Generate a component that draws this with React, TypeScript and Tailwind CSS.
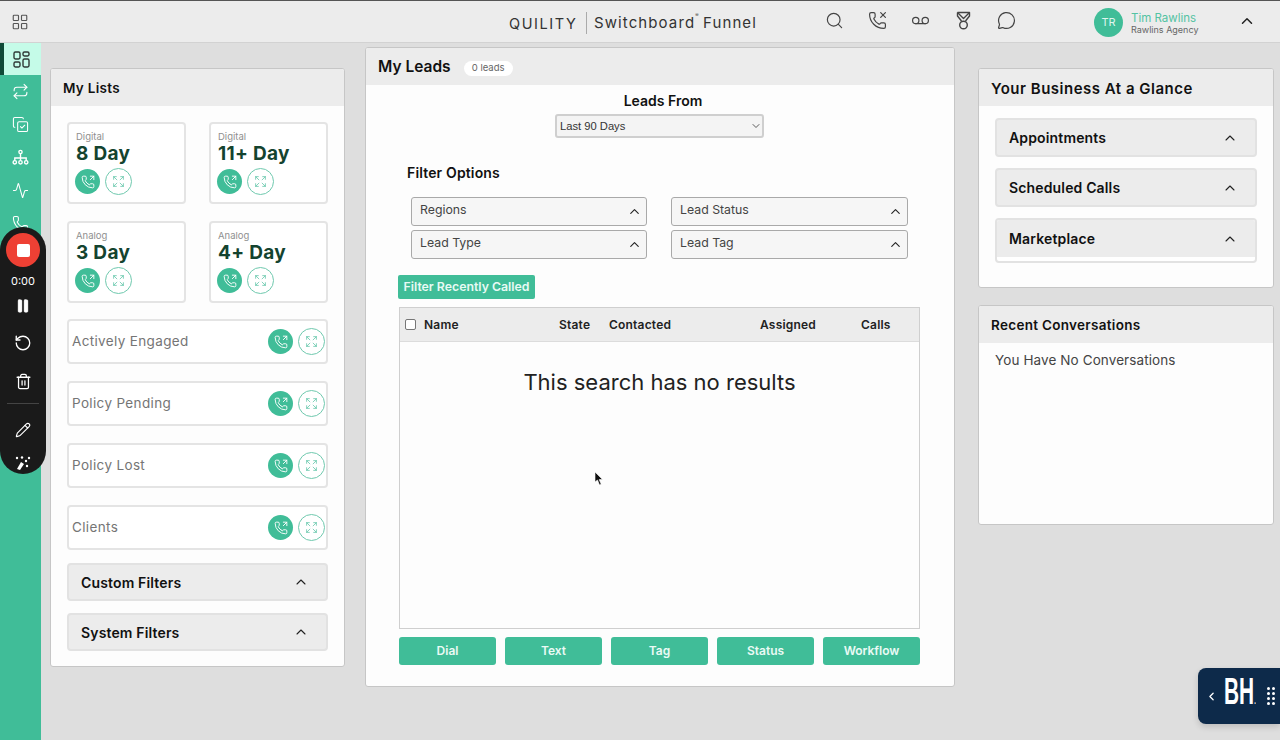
import React from 'react';
import {
  Activity,
  ChevronDown,
  ChevronLeft,
  ChevronUp,
  CopyCheck,
  Expand,
  LayoutGrid,
  MessageCircle,
  Pause,
  Pencil,
  Phone,
  PhoneMissed,
  PhoneOutgoing,
  Repeat,
  RotateCcw,
  Search,
  Trash2,
  Voicemail,
} from 'lucide-react';

const font = "font-['Inter','Open_Sans',sans-serif]";

const ActiveIcon = () => (
  <svg width="17" height="17" viewBox="0 0 17 17" fill="none" stroke="#2f3a36" strokeWidth="1.4">
    <rect x="1" y="1" width="6" height="7" rx="1.4" />
    <rect x="10" y="1" width="6" height="4" rx="1.4" />
    <rect x="1" y="11" width="6" height="5" rx="1.4" />
    <rect x="10" y="8" width="6" height="8" rx="1.4" />
  </svg>
);

const RibbonMedal = () => (
  <svg width="19" height="19" viewBox="0 0 19 19" fill="none" stroke="#444" strokeWidth="1.4" strokeLinejoin="round">
    <path d="M3.5 1.5 H15.5 V5 L11.5 10 M3.5 1.5 V5 L7.5 10" />
    <path d="M3.5 1.5 L9.5 7.5 L15.5 1.5" />
    <circle cx="9.5" cy="14" r="3.8" />
  </svg>
);

const SiteMap = () => (
  <svg width="17" height="17" viewBox="0 0 17 17" fill="none" stroke="#fff" strokeWidth="1.4">
    <circle cx="8.5" cy="3" r="1.6" />
    <path d="M8.5 4.6 V11.5 M2.8 11.5 V9 H14.2 V11.5" />
    <circle cx="2.8" cy="13.3" r="1.7" />
    <circle cx="8.5" cy="13.3" r="1.7" />
    <circle cx="14.2" cy="13.3" r="1.7" />
  </svg>
);

const CallButtons = () => (
  <div className="flex items-center gap-[5px]">
    <div className="w-[25px] h-[25px] rounded-full bg-[#40bd98] flex items-center justify-center">
      <PhoneOutgoing size={14} color="#fff" strokeWidth={1.6} />
    </div>
    <div className="w-[27px] h-[27px] rounded-full border border-[#6fc9ae] bg-white flex items-center justify-center">
      <Expand size={13} color="#5cc4a6" strokeWidth={1.4} />
    </div>
  </div>
);

const DayCard = ({ kind, label }: { kind: string; label: string }) => (
  <div className="w-[119px] h-[82px] border-2 border-[#e4e4e4] rounded-[4px] bg-white pl-[7px] pt-[7px]">
    <div className="text-[9.5px] leading-[12px] text-[#8f8f8f]">{kind}</div>
    <div className="text-[19px] leading-[21px] font-bold text-[#14432f] tracking-[0.3px] mb-[4px]">{label}</div>
    <div className="-ml-[1px]">
      <CallButtons />
    </div>
  </div>
);

const ListRow = ({ label }: { label: string }) => (
  <div className="h-[45px] border-2 border-[#e4e4e4] rounded-[4px] bg-white flex items-center justify-between pl-[3px] pr-[1px]">
    <span className="text-[13.5px] text-[#757575] tracking-[0.35px]">{label}</span>
    <CallButtons />
  </div>
);

const Accordion = ({ label, className = 'h-[39px]' }: { label: string; className?: string }) => (
  <div className={`${className} border-2 border-[#e2e2e2] rounded-[4px] bg-[#ececec] flex items-center justify-between pl-[12px] pr-[17px]`}>
    <span className="text-[14px] font-semibold text-[#111] tracking-[0.15px]">{label}</span>
    <ChevronUp size={16} color="#222" strokeWidth={1.6} />
  </div>
);

const FilterSelect = ({ label }: { label: string }) => (
  <div className="h-[29px] border border-[#a9a9a9] rounded-[3px] bg-[#f6f6f6] flex items-center justify-between pl-[8px] pr-[4px]">
    <span className="text-[12.3px] text-[#444] pb-[2px]">{label}</span>
    <ChevronUp size={15} color="#222" strokeWidth={1.8} />
  </div>
);

const PanelHeader = ({ title }: { title: string }) => (
  <div className="h-[37px] bg-[#ececec] flex items-center pl-[12px] pt-[2px]">
    <span className="text-[13.5px] font-semibold text-[#111] tracking-[0.3px]">{title}</span>
  </div>
);

const panel = 'bg-[#fdfdfd] rounded-[3px] border border-[#c6c6c6] overflow-hidden';

export default function App() {
  return (
    <div className={`${font} relative w-[1280px] h-[740px] overflow-hidden bg-[#dedede]`}>
      {/* top bar */}
      <header className="h-[43px] bg-[#ececec] border-t border-t-[#555] border-b border-b-[#d2d2d2] flex items-center">
        <div className="ml-[11px] w-[18px]">
          <LayoutGrid size={18} color="#555" strokeWidth={1.5} />
        </div>
        <span className="ml-[480px] w-[77px] pt-[4px] text-[14.5px] tracking-[1.6px] text-[#333]">QUILITY</span>
        <div className="w-px h-[22px] bg-[#aaa] mt-[2px]" />
        <span className="ml-[7px] w-[109px] pt-[4px] text-[15px] tracking-[1.1px] text-[#333]">
          Switchboard<span className="align-top text-[5px] tracking-normal">®</span>
        </span>
        <span className="w-[56px] pt-[4px] text-[15px] tracking-[1.1px] text-[#333]">Funnel</span>
        <div className="ml-[66px] -mt-[2px] flex items-center gap-[24px]">
          <Search size={19} color="#444" strokeWidth={1.5} />
          <PhoneMissed size={19} color="#444" strokeWidth={1.5} />
          <Voicemail size={19} color="#444" strokeWidth={1.5} />
          <RibbonMedal />
          <MessageCircle size={19} color="#444" strokeWidth={1.5} />
        </div>
        <div className="ml-[78px] mt-[1px] w-[29px] h-[29px] rounded-full bg-[#40bd98] flex items-center justify-center text-[11px] text-[#dff5ee]">TR</div>
        <div className="ml-[8px] mt-[5px] w-[108px]">
          <div className="text-[11.5px] leading-[12px] text-[#54c3a3]">Tim Rawlins</div>
          <div className="text-[9px] leading-[12px] text-[#666]">Rawlins Agency</div>
        </div>
        <ChevronUp size={18} color="#222" strokeWidth={2} className="-ml-[1px] -mt-[2px]" />
      </header>

      <div className="flex h-[697px]">
        {/* side nav */}
        <nav className="w-[41px] bg-[#40bd98] flex flex-col">
          <div className="h-[32px] bg-[#c5fbe8] border-l-4 border-l-[#0f4a37] flex items-center justify-center pr-[2px]">
            <ActiveIcon />
          </div>
          <div className="h-[33px] flex items-center justify-center">
            <Repeat size={17} color="#fff" strokeWidth={1.5} />
          </div>
          <div className="h-[33px] flex items-center justify-center">
            <CopyCheck size={17} color="#fff" strokeWidth={1.5} />
          </div>
          <div className="h-[33px] flex items-center justify-center">
            <SiteMap />
          </div>
          <div className="h-[33px] flex items-center justify-center">
            <Activity size={17} color="#fff" strokeWidth={1.5} />
          </div>
          <div className="h-[33px] flex items-center justify-center">
            <Phone size={17} color="#fff" strokeWidth={1.5} />
          </div>
        </nav>

        {/* my lists */}
        <section className={`${panel} ml-[9px] mt-[25px] w-[295px] h-[599px]`}>
          <PanelHeader title="My Lists" />
          <div className="px-[16px] pt-[16px]">
            <div className="grid grid-cols-[119px_119px] justify-between gap-y-[17px]">
              <DayCard kind="Digital" label="8 Day" />
              <DayCard kind="Digital" label="11+ Day" />
              <DayCard kind="Analog" label="3 Day" />
              <DayCard kind="Analog" label="4+ Day" />
            </div>
            <div className="mt-[16px] flex flex-col gap-[17px]">
              <ListRow label="Actively Engaged" />
              <ListRow label="Policy Pending" />
              <ListRow label="Policy Lost" />
              <ListRow label="Clients" />
            </div>
            <div className="mt-[13px] flex flex-col gap-[12px]">
              <Accordion label="Custom Filters" className="h-[38px]" />
              <Accordion label="System Filters" className="h-[38px]" />
            </div>
          </div>
        </section>

        {/* my leads */}
        <section className={`${panel} ml-[20px] mt-[4px] w-[590px] h-[640px]`}>
          <div className="h-[37px] bg-[#ececec] flex items-center pl-[12px]">
            <span className="text-[15.5px] font-semibold text-[#111] pt-[1px]">My Leads</span>
            <span className="ml-[13px] mt-[4px] w-[49px] h-[15px] rounded-full bg-white flex items-center justify-center text-[9.5px] text-[#666]">0 leads</span>
          </div>
          <div className="pl-[6px] text-center mt-[8px] text-[14px] leading-[16px] font-semibold text-[#111]">Leads From</div>
          <div className="ml-[189px] mt-[5px] w-[209px] h-[24px] border-2 border-[#cfcfcf] rounded-[3px] bg-[#f4f4f4] flex items-center justify-between pl-[3px] font-['Liberation_Sans',sans-serif] text-[11.2px] text-[#333]">
            <span>Last 90 Days</span>
            <ChevronDown size={12} color="#333" strokeWidth={1.6} />
          </div>
          <div className="ml-[41px] mt-[27px] text-[14px] leading-[16px] font-semibold text-[#111] tracking-[0.15px]">Filter Options</div>
          <div className="ml-[45px] mt-[16px] grid grid-cols-[236px_237px] gap-x-[24px] gap-y-[4px]">
            <FilterSelect label="Regions" />
            <FilterSelect label="Lead Status" />
            <FilterSelect label="Lead Type" />
            <FilterSelect label="Lead Tag" />
          </div>
          <div className="ml-[32px] mt-[16px] w-[137px] h-[24px] rounded-[2px] bg-[#40bd98] flex items-center justify-center text-[12.3px] font-semibold text-[#e8faf4]">
            Filter Recently Called
          </div>
          <div className="ml-[33px] mt-[8px] w-[521px] h-[322px] border border-[#cfcfcf]">
            <div className="h-[34px] bg-[#ececec] border-b border-b-[#dcdcdc] relative grid grid-cols-[135px_50px_151px_101px_1fr] items-center pl-[24px] text-[12px] font-semibold text-[#222] tracking-[0.2px]">
              <div className="absolute left-[5px] top-[11px] w-[11px] h-[11px] rounded-[2px] border border-[#777] bg-white" />
              <span>Name</span>
              <span>State</span>
              <span>Contacted</span>
              <span>Assigned</span>
              <span>Calls</span>
            </div>
            <div className="mt-[26px] text-center text-[22px] leading-[28px] text-[#222]">This search has no results</div>
          </div>
          <div className="ml-[33px] mt-[8px] w-[521px] flex justify-between">
            {['Dial', 'Text', 'Tag', 'Status', 'Workflow'].map((b) => (
              <div key={b} className="w-[97px] h-[28px] rounded-[3px] bg-[#40bd98] flex items-center justify-center text-[12px] font-semibold text-[#eafaf5]">{b}</div>
            ))}
          </div>
        </section>

        {/* right column */}
        <div className="ml-[23px] mt-[25px] w-[296px] flex flex-col gap-[17px]">
          <section className={`${panel} h-[220px]`}>
            <div className="h-[37px] bg-[#ececec] flex items-center pl-[12px] pt-[3px]">
              <span className="text-[15px] font-semibold text-[#111] tracking-[0.5px]">Your Business At a Glance</span>
            </div>
            <div className="px-[16px] pt-[12px] flex flex-col gap-[11px]">
              <Accordion label="Appointments" />
              <Accordion label="Scheduled Calls" />
              <div className="h-[45px] border-2 border-[#e2e2e2] rounded-[4px] overflow-hidden bg-white">
                <div className="h-[37px] bg-[#ececec] flex items-center justify-between pl-[12px] pr-[17px]">
                  <span className="text-[14px] font-semibold text-[#111] tracking-[0.15px]">Marketplace</span>
                  <ChevronUp size={16} color="#222" strokeWidth={1.6} />
                </div>
              </div>
            </div>
          </section>
          <section className={`${panel} h-[220px]`}>
            <PanelHeader title="Recent Conversations" />
            <div className="pl-[16px] pt-[7px] text-[13.5px] tracking-[0.1px] text-[#444]">You Have No Conversations</div>
          </section>
        </div>
      </div>

      {/* recorder overlay */}
      <div className="absolute left-0 top-[227px] w-[46px] h-[247px] rounded-[23px] bg-[#1a1a1a] flex flex-col items-center overflow-hidden">
        <div className="mt-[6px] w-[34px] h-[34px] rounded-full bg-[#ee4034] flex items-center justify-center">
          <div className="w-[13px] h-[13px] rounded-[2px] bg-white" />
        </div>
        <div className="mt-[7px] text-[11px] leading-[14px] text-white">0:00</div>
        <Pause size={16} color="#fff" fill="#fff" strokeWidth={1.5} className="mt-[10px]" />
        <RotateCcw size={18} color="#fff" strokeWidth={1.8} className="mt-[20px]" />
        <Trash2 size={17} color="#fff" strokeWidth={1.8} className="mt-[21px]" />
        <div className="mt-[13px] w-[32px] h-px bg-[#444]" />
        <Pencil size={16} color="#fff" strokeWidth={1.7} className="mt-[18px]" />
        <svg width="16" height="14" viewBox="0 0 16 14" fill="#fff" className="mt-[18px]">
          <circle cx="2" cy="2" r="1.2" />
          <circle cx="7" cy="1.5" r="1.2" />
          <circle cx="14" cy="2" r="1.2" />
          <circle cx="11" cy="5" r="1.2" />
          <path d="M2 13 L6 6 L9 8 L5 14 Z" />
          <circle cx="12" cy="10" r="1.2" />
        </svg>
      </div>

      {/* cursor */}
      <svg width="10" height="15" viewBox="0 0 10 15" className="absolute left-[594px] top-[471px]">
        <path d="M1 1 L1 11 L3.5 9 L5.5 14 L7.2 13.2 L5.2 8.6 L8.5 8.4 Z" fill="#111" stroke="#fff" strokeWidth="0.6" />
      </svg>

      {/* floating widget */}
      <div className="absolute left-[1198px] top-[668px] w-[82px] h-[56px] rounded-l-[8px] bg-[#0d2a4a] shadow-[0_3px_6px_rgba(0,0,0,0.15)] flex items-center pl-[7px]">
        <ChevronLeft size={13} color="#fff" strokeWidth={2.4} />
        <span className="ml-[6px] w-[32px] font-['Liberation_Sans',sans-serif] text-[36px] font-bold leading-[36px] text-white scale-x-[0.58] origin-left whitespace-nowrap">
          BH<span className="text-[10px]">.</span>
        </span>
        <div className="ml-[11px] grid grid-cols-2 gap-[2px]">
          {Array.from({ length: 8 }).map((_, i) => (
            <div key={i} className="w-[3px] h-[3px] rounded-full bg-white" />
          ))}
        </div>
      </div>
    </div>
  );
}
